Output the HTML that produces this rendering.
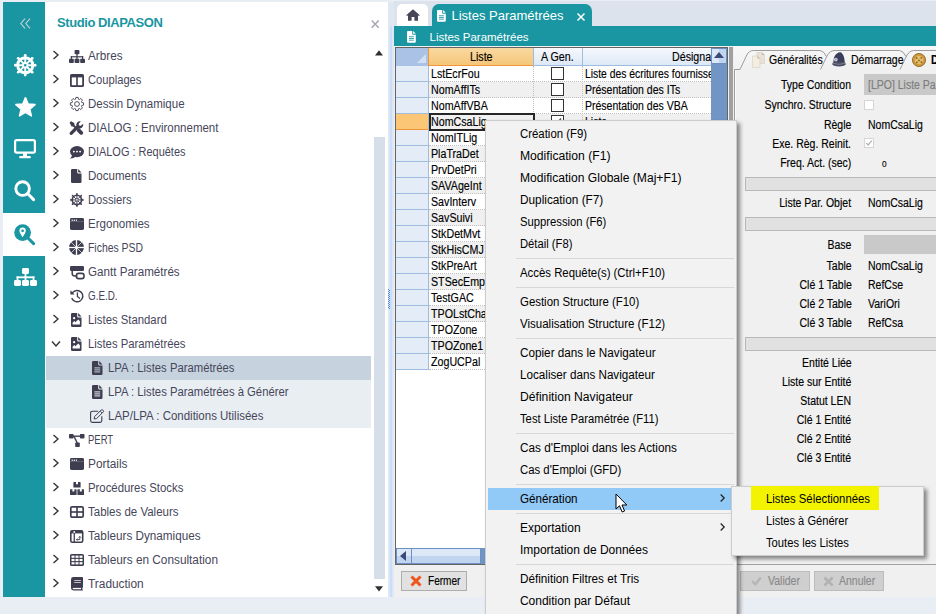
<!DOCTYPE html><html><head><meta charset="utf-8"><style>
*{box-sizing:border-box;margin:0;padding:0}
html,body{width:936px;height:614px;overflow:hidden}
body{position:relative;background:#e9eef4;font-family:"Liberation Sans",sans-serif;}
.a{position:absolute}
.t{position:absolute;white-space:pre;line-height:1}
.tree{font-size:12px;color:#46465a}
.g{font-size:12px;color:#000;transform:scaleX(0.89);transform-origin:0 0;-webkit-text-stroke:0.15px #000}
.m{font-size:12px;color:#000}
.f{font-size:12px;color:#000;transform:scaleX(0.875);transform-origin:0 0;-webkit-text-stroke:0.15px currentColor}
.fr{transform-origin:100% 0}
svg{position:absolute;overflow:visible}
</style></head><body><div class="a" style="left:3px;top:2px;width:42px;height:595px;background:#1996a1"></div>
<div class="a" style="left:3px;top:213px;width:42px;height:43px;background:#fff"></div>
<div class="a" style="left:45px;top:2px;width:343px;height:595px;background:#fff"></div>
<div class="t" style="left:57px;top:16px;font-size:13px;font-weight:700;letter-spacing:-0.42px;color:#1996a1">Studio DIAPASON</div>
<svg style="left:13.57px;top:53.77px" width="22.47" height="22.47" viewBox="0 0 16 16"><circle cx="8" cy="8" r="5.4" fill="none" stroke="#fff" stroke-width="2.1"/><circle cx="8" cy="8" r="1.6" fill="none" stroke="#fff" stroke-width="1.35"/><line x1="9.80" y1="8.00" x2="15.00" y2="8.00" stroke="#fff" stroke-width="1.35"/><circle cx="15.00" cy="8.00" r="1.0" fill="#fff"/><line x1="9.27" y1="9.27" x2="12.95" y2="12.95" stroke="#fff" stroke-width="1.35"/><circle cx="12.95" cy="12.95" r="1.0" fill="#fff"/><line x1="8.00" y1="9.80" x2="8.00" y2="15.00" stroke="#fff" stroke-width="1.35"/><circle cx="8.00" cy="15.00" r="1.0" fill="#fff"/><line x1="6.73" y1="9.27" x2="3.05" y2="12.95" stroke="#fff" stroke-width="1.35"/><circle cx="3.05" cy="12.95" r="1.0" fill="#fff"/><line x1="6.20" y1="8.00" x2="1.00" y2="8.00" stroke="#fff" stroke-width="1.35"/><circle cx="1.00" cy="8.00" r="1.0" fill="#fff"/><line x1="6.73" y1="6.73" x2="3.05" y2="3.05" stroke="#fff" stroke-width="1.35"/><circle cx="3.05" cy="3.05" r="1.0" fill="#fff"/><line x1="8.00" y1="6.20" x2="8.00" y2="1.00" stroke="#fff" stroke-width="1.35"/><circle cx="8.00" cy="1.00" r="1.0" fill="#fff"/><line x1="9.27" y1="6.73" x2="12.95" y2="3.05" stroke="#fff" stroke-width="1.35"/><circle cx="12.95" cy="3.05" r="1.0" fill="#fff"/></svg>
<svg style="left:14.55px;top:96.83px" width="20.90" height="19.95" viewBox="0 0 22 21"><polygon points="11.00,0.70 13.82,7.42 21.08,8.02 15.57,12.78 17.23,19.88 11.00,16.10 4.77,19.88 6.43,12.78 0.92,8.02 8.18,7.42" fill="#fff" stroke="#fff" stroke-width="1.6" stroke-linejoin="round"/></svg>
<svg style="left:14.00px;top:138.60px" width="22.00" height="20.00" viewBox="0 0 22 20"><rect x="1.1" y="1.1" width="19.8" height="12.6" rx="1.6" fill="none" stroke="#fff" stroke-width="2.2"/><rect x="9" y="14" width="4" height="3.4" fill="#fff"/><rect x="5.2" y="17" width="11.6" height="2.2" rx="1" fill="#fff"/></svg>
<svg style="left:14.20px;top:179.90px" width="21.00" height="21.00" viewBox="0 0 21 21"><circle cx="8.6" cy="8.6" r="6.8" fill="none" stroke="#fff" stroke-width="2.9"/><path d="M13.8 13.8 L19.6 19.6" stroke="#fff" stroke-width="3" stroke-linecap="round"/></svg>
<svg style="left:14.20px;top:224.00px" width="21.00" height="21.00" viewBox="0 0 21 21"><circle cx="8.6" cy="8.6" r="8.4" fill="#1996a1"/><path d="M14.2 14.2 L19.6 19.6" stroke="#1996a1" stroke-width="3" stroke-linecap="round"/><path d="M8.6 3.6 Q11.8 3.6 11.8 6.7 Q11.8 8.6 8.6 13.2 Q5.4 8.6 5.4 6.7 Q5.4 3.6 8.6 3.6 Z" fill="#fff"/><circle cx="8.6" cy="6.8" r="1.35" fill="#1996a1"/></svg>
<svg style="left:13.50px;top:267.50px" width="23.00" height="18.00" viewBox="0 0 23 18"><rect x="8" y="0" width="7" height="6" rx="1.4" fill="#fff"/><rect x="10.6" y="5.6" width="1.8" height="4" fill="#fff"/><rect x="2.6" y="8.4" width="17.8" height="1.8" fill="#fff"/>
<rect x="2.6" y="8.4" width="1.8" height="4" fill="#fff"/><rect x="10.6" y="8.4" width="1.8" height="4" fill="#fff"/><rect x="18.6" y="8.4" width="1.8" height="4" fill="#fff"/>
<rect x="0" y="12" width="7" height="6" rx="1.4" fill="#fff"/><rect x="8" y="12" width="7" height="6" rx="1.4" fill="#fff"/><rect x="16" y="12" width="7" height="6" rx="1.4" fill="#fff"/></svg>
<svg style="left:20px;top:18px" width="11" height="11" viewBox="0 0 11 11"><path d="M5 0.6 L0.8 5.5 L5 10.4 M10 0.6 L5.8 5.5 L10 10.4" fill="none" stroke="#c9d3d6" stroke-width="1.1"/></svg>
<svg style="left:371px;top:19.5px" width="8.4" height="8.2" viewBox="0 0 9 9"><path d="M0.6 0.6 L8.4 8.4 M8.4 0.6 L0.6 8.4" fill="none" stroke="#a3a8b0" stroke-width="1.6"/></svg>
<svg style="left:375.2px;top:50.2px" width="8" height="5.8" viewBox="0 0 9 6"><path d="M0 6 L4.5 0 L9 6 Z" fill="#303030"/></svg>
<svg style="left:375.1px;top:586px" width="8" height="5.6" viewBox="0 0 9 6"><path d="M0 0 L4.5 6 L9 0 Z" fill="#303030"/></svg>
<div class="a" style="left:46px;top:356px;width:325px;height:24px;background:#c6d3df"></div>
<div class="a" style="left:46px;top:380px;width:325px;height:48px;background:#e9eef3"></div>
<div class="a" style="left:374px;top:137px;width:11px;height:442px;background:#d5dee9"></div>
<div class="t tree" style="left:87.90px;top:49.7px;transform:scaleX(0.9781);transform-origin:0 0">Arbres</div>
<svg style="left:52px;top:50px" width="8" height="10" viewBox="0 0 8 10"><path d="M1.5 1 L6 5 L1.5 9" fill="none" stroke="#333" stroke-width="1.4"/></svg>
<svg style="left:68.50px;top:49.50px" width="16.00" height="13.00" viewBox="0 0 16 13"><rect x="5.6" y="0" width="4.8" height="4.3" rx="0.8" fill="#3e3e50"/>
<rect x="7.4" y="4" width="1.2" height="3" fill="#3e3e50"/><rect x="1.8" y="6.2" width="12.4" height="1.2" fill="#3e3e50"/>
<rect x="1.8" y="6.2" width="1.2" height="3" fill="#3e3e50"/><rect x="7.4" y="6.2" width="1.2" height="3" fill="#3e3e50"/><rect x="13" y="6.2" width="1.2" height="3" fill="#3e3e50"/>
<rect x="0" y="8.7" width="4.8" height="4.3" rx="0.8" fill="#3e3e50"/><rect x="5.6" y="8.7" width="4.8" height="4.3" rx="0.8" fill="#3e3e50"/><rect x="11.2" y="8.7" width="4.8" height="4.3" rx="0.8" fill="#3e3e50"/></svg>
<div class="t tree" style="left:87.90px;top:73.7px;transform:scaleX(0.9307);transform-origin:0 0">Couplages</div>
<svg style="left:52px;top:74px" width="8" height="10" viewBox="0 0 8 10"><path d="M1.5 1 L6 5 L1.5 9" fill="none" stroke="#333" stroke-width="1.4"/></svg>
<svg style="left:69.50px;top:73.50px" width="14.00" height="13.00" viewBox="0 0 14 13"><rect x="0" y="0" width="14" height="13" rx="1.6" fill="#3e3e50"/><rect x="1.8" y="3.4" width="4.4" height="7.8" fill="#fff"/><rect x="7.8" y="3.4" width="4.4" height="7.8" fill="#fff"/></svg>
<div class="t tree" style="left:87.90px;top:97.7px;transform:scaleX(0.9588);transform-origin:0 0">Dessin Dynamique</div>
<svg style="left:52px;top:98px" width="8" height="10" viewBox="0 0 8 10"><path d="M1.5 1 L6 5 L1.5 9" fill="none" stroke="#333" stroke-width="1.4"/></svg>
<svg style="left:69.50px;top:97.00px" width="14.00" height="14.00" viewBox="0 0 14 14"><path d="M5.52 2.22 L5.87 0.40 L8.13 0.40 L8.48 2.22 L9.33 2.58 L10.87 1.53 L12.47 3.13 L11.42 4.67 L11.78 5.52 L13.60 5.87 L13.60 8.13 L11.78 8.48 L11.42 9.33 L12.47 10.87 L10.87 12.47 L9.33 11.42 L8.48 11.78 L8.13 13.60 L5.87 13.60 L5.52 11.78 L4.67 11.42 L3.13 12.47 L1.53 10.87 L2.58 9.33 L2.22 8.48 L0.40 8.13 L0.40 5.87 L2.22 5.52 L2.58 4.67 L1.53 3.13 L3.13 1.53 L4.67 2.58 Z" fill="none" stroke="#3e3e50" stroke-width="0.9" stroke-linejoin="round"/><circle cx="7" cy="7" r="2.4" fill="none" stroke="#3e3e50" stroke-width="0.9"/></svg>
<div class="t tree" style="left:87.90px;top:121.7px;transform:scaleX(0.9588);transform-origin:0 0">DIALOG : Environnement</div>
<svg style="left:52px;top:122px" width="8" height="10" viewBox="0 0 8 10"><path d="M1.5 1 L6 5 L1.5 9" fill="none" stroke="#333" stroke-width="1.4"/></svg>
<svg style="left:69.02px;top:120.72px" width="14.55" height="14.55" viewBox="0 0 15 15"><path d="M0.6 1.6 L2.2 0.2 L5.6 2.4 L5.6 4.2 L8.2 6.8 L6.8 8.2 L4.2 5.6 L2.6 5.6 Z" fill="#3e3e50"/>
<path d="M8.6 8.4 L10.2 7.0 L14.2 11.0 Q15.2 12.4 14 13.8 Q12.6 14.8 11.4 13.8 L8 10.2 Z" fill="#3e3e50"/>
<path d="M14.6 2.8 Q15.2 5.6 13.2 7.0 Q11.6 8.0 10.0 7.4 L3.4 14.0 Q2.2 14.9 1.0 13.9 Q0.1 12.8 1.0 11.6 L7.6 5.0 Q7.0 3.0 8.6 1.4 Q10.2 0.0 12.2 0.5 L10.0 2.8 L10.4 4.6 L12.2 5.0 Z" fill="#3e3e50"/></svg>
<div class="t tree" style="left:87.90px;top:145.7px;transform:scaleX(0.9133);transform-origin:0 0">DIALOG : Requêtes</div>
<svg style="left:52px;top:146px" width="8" height="10" viewBox="0 0 8 10"><path d="M1.5 1 L6 5 L1.5 9" fill="none" stroke="#333" stroke-width="1.4"/></svg>
<svg style="left:69.50px;top:145.50px" width="14.00" height="13.00" viewBox="0 0 14 13"><ellipse cx="7" cy="5.6" rx="7" ry="5.6" fill="#3e3e50"/><path d="M2.2 8.4 Q1.6 11.4 0 12.6 Q3.6 12.8 5.8 10.6 Z" fill="#3e3e50"/>
<circle cx="3.9" cy="5.6" r="0.95" fill="#fff"/><circle cx="7" cy="5.6" r="0.95" fill="#fff"/><circle cx="10.1" cy="5.6" r="0.95" fill="#fff"/></svg>
<div class="t tree" style="left:87.90px;top:169.7px;transform:scaleX(0.9630);transform-origin:0 0">Documents</div>
<svg style="left:52px;top:170px" width="8" height="10" viewBox="0 0 8 10"><path d="M1.5 1 L6 5 L1.5 9" fill="none" stroke="#333" stroke-width="1.4"/></svg>
<svg style="left:71.25px;top:169.00px" width="10.50" height="14.00" viewBox="0 0 10.5 14"><path d="M1.2 0 H6.2 V3.6 Q6.2 4.4 7 4.4 H10.5 V12.8 Q10.5 14 9.3 14 H1.2 Q0 14 0 12.8 V1.2 Q0 0 1.2 0 Z" fill="#3e3e50"/><path d="M7.2 0 L10.5 3.4 H7.6 Q7.2 3.4 7.2 3 Z" fill="#3e3e50"/></svg>
<div class="t tree" style="left:87.90px;top:193.7px;transform:scaleX(0.9330);transform-origin:0 0">Dossiers</div>
<svg style="left:52px;top:194px" width="8" height="10" viewBox="0 0 8 10"><path d="M1.5 1 L6 5 L1.5 9" fill="none" stroke="#333" stroke-width="1.4"/></svg>
<svg style="left:69.60px;top:193.10px" width="13.80" height="13.80" viewBox="0 0 16 16"><circle cx="8" cy="8" r="5.4" fill="none" stroke="#3e3e50" stroke-width="2.0"/><circle cx="8" cy="8" r="1.6" fill="none" stroke="#3e3e50" stroke-width="1.1"/><line x1="9.80" y1="8.00" x2="15.00" y2="8.00" stroke="#3e3e50" stroke-width="1.1"/><circle cx="15.00" cy="8.00" r="1.0" fill="#3e3e50"/><line x1="9.27" y1="9.27" x2="12.95" y2="12.95" stroke="#3e3e50" stroke-width="1.1"/><circle cx="12.95" cy="12.95" r="1.0" fill="#3e3e50"/><line x1="8.00" y1="9.80" x2="8.00" y2="15.00" stroke="#3e3e50" stroke-width="1.1"/><circle cx="8.00" cy="15.00" r="1.0" fill="#3e3e50"/><line x1="6.73" y1="9.27" x2="3.05" y2="12.95" stroke="#3e3e50" stroke-width="1.1"/><circle cx="3.05" cy="12.95" r="1.0" fill="#3e3e50"/><line x1="6.20" y1="8.00" x2="1.00" y2="8.00" stroke="#3e3e50" stroke-width="1.1"/><circle cx="1.00" cy="8.00" r="1.0" fill="#3e3e50"/><line x1="6.73" y1="6.73" x2="3.05" y2="3.05" stroke="#3e3e50" stroke-width="1.1"/><circle cx="3.05" cy="3.05" r="1.0" fill="#3e3e50"/><line x1="8.00" y1="6.20" x2="8.00" y2="1.00" stroke="#3e3e50" stroke-width="1.1"/><circle cx="8.00" cy="1.00" r="1.0" fill="#3e3e50"/><line x1="9.27" y1="6.73" x2="12.95" y2="3.05" stroke="#3e3e50" stroke-width="1.1"/><circle cx="12.95" cy="3.05" r="1.0" fill="#3e3e50"/></svg>
<div class="t tree" style="left:87.90px;top:217.7px;transform:scaleX(0.9625);transform-origin:0 0">Ergonomies</div>
<svg style="left:52px;top:218px" width="8" height="10" viewBox="0 0 8 10"><path d="M1.5 1 L6 5 L1.5 9" fill="none" stroke="#333" stroke-width="1.4"/></svg>
<svg style="left:69.50px;top:218.00px" width="14.00" height="12.00" viewBox="0 0 14 12"><rect x="0" y="0" width="14" height="12" rx="1.4" fill="#3e3e50"/><rect x="1.6" y="1.6" width="1.3" height="1.2" fill="#fff"/><rect x="3.7" y="1.6" width="1.3" height="1.2" fill="#fff"/><rect x="5.8" y="1.6" width="1.3" height="1.2" fill="#fff"/><rect x="0" y="3.5" width="14" height="0.5" fill="#fff" opacity="0.35"/></svg>
<div class="t tree" style="left:87.90px;top:241.7px;transform:scaleX(0.8679);transform-origin:0 0">Fiches PSD</div>
<svg style="left:52px;top:242px" width="8" height="10" viewBox="0 0 8 10"><path d="M1.5 1 L6 5 L1.5 9" fill="none" stroke="#333" stroke-width="1.4"/></svg>
<svg style="left:69.00px;top:240.00px" width="15.00" height="15.00" viewBox="0 0 15 15"><circle cx="7.5" cy="7.5" r="7.4" fill="#3e3e50"/><circle cx="7.5" cy="7.5" r="1.5" fill="#fff"/><line x1="8.50" y1="7.50" x2="15.10" y2="7.50" stroke="#fff" stroke-width="1.3"/><line x1="7.50" y1="8.50" x2="7.50" y2="15.10" stroke="#fff" stroke-width="1.3"/><line x1="6.50" y1="7.50" x2="-0.10" y2="7.50" stroke="#fff" stroke-width="1.3"/><line x1="7.50" y1="6.50" x2="7.50" y2="-0.10" stroke="#fff" stroke-width="1.3"/><line x1="8.21" y1="8.21" x2="12.87" y2="12.87" stroke="#fff" stroke-width="0.7"/><line x1="6.79" y1="8.21" x2="2.13" y2="12.87" stroke="#fff" stroke-width="0.7"/><line x1="6.79" y1="6.79" x2="2.13" y2="2.13" stroke="#fff" stroke-width="0.7"/><line x1="8.21" y1="6.79" x2="12.87" y2="2.13" stroke="#fff" stroke-width="0.7"/></svg>
<div class="t tree" style="left:87.90px;top:265.7px;transform:scaleX(0.9678);transform-origin:0 0">Gantt Paramétrés</div>
<svg style="left:52px;top:266px" width="8" height="10" viewBox="0 0 8 10"><path d="M1.5 1 L6 5 L1.5 9" fill="none" stroke="#333" stroke-width="1.4"/></svg>
<svg style="left:69.50px;top:265.50px" width="14.00" height="13.00" viewBox="0 0 14 13"><rect x="0" y="0" width="14" height="5" rx="1.2" fill="#3e3e50"/><path d="M2.2 4.5 V7.6 Q2.2 10 4.6 10 H7.4" fill="none" stroke="#3e3e50" stroke-width="1.5"/><rect x="6.4" y="7.4" width="7.6" height="5.2" rx="2.2" fill="none" stroke="#3e3e50" stroke-width="1.6"/></svg>
<div class="t tree" style="left:87.90px;top:289.7px;transform:scaleX(0.8222);transform-origin:0 0">G.E.D.</div>
<svg style="left:52px;top:290px" width="8" height="10" viewBox="0 0 8 10"><path d="M1.5 1 L6 5 L1.5 9" fill="none" stroke="#333" stroke-width="1.4"/></svg>
<svg style="left:69.50px;top:289.00px" width="14.00" height="14.00" viewBox="0 0 14 14"><path d="M2.6 3.6 A5.7 5.7 0 1 1 2.0 9.6" fill="none" stroke="#3e3e50" stroke-width="1.5" stroke-linecap="round"/><path d="M0.4 1.2 V5.4 H4.6 Z" fill="#3e3e50"/><path d="M7.4 3.8 V7.4 L9.6 9.2" fill="none" stroke="#3e3e50" stroke-width="1.3" stroke-linecap="round"/></svg>
<div class="t tree" style="left:87.90px;top:313.7px;transform:scaleX(0.9439);transform-origin:0 0">Listes Standard</div>
<svg style="left:52px;top:314px" width="8" height="10" viewBox="0 0 8 10"><path d="M1.5 1 L6 5 L1.5 9" fill="none" stroke="#333" stroke-width="1.4"/></svg>
<svg style="left:71.25px;top:313.00px" width="10.50" height="14.00" viewBox="0 0 10.5 14"><path d="M1.2 0 H6.2 V3.6 Q6.2 4.4 7 4.4 H10.5 V12.8 Q10.5 14 9.3 14 H1.2 Q0 14 0 12.8 V1.2 Q0 0 1.2 0 Z" fill="#3e3e50"/><path d="M7.2 0 L10.5 3.4 H7.6 Q7.2 3.4 7.2 3 Z" fill="#3e3e50"/>
<circle cx="3.1" cy="5.2" r="1.15" fill="#fff"/><path d="M1.6 11.4 V9.8 L3.3 8 L4.5 9.2 L7.2 6.4 L8.9 8.2 V11.4 Z" fill="#fff"/></svg>
<div class="t tree" style="left:87.90px;top:337.7px;transform:scaleX(0.9432);transform-origin:0 0">Listes Paramétrées</div>
<svg style="left:51px;top:340px" width="10" height="8" viewBox="0 0 10 8"><path d="M1 1.5 L5 6 L9 1.5" fill="none" stroke="#333" stroke-width="1.4"/></svg>
<svg style="left:71.25px;top:337.00px" width="10.50" height="14.00" viewBox="0 0 10.5 14"><path d="M1.2 0 H6.2 V3.6 Q6.2 4.4 7 4.4 H10.5 V12.8 Q10.5 14 9.3 14 H1.2 Q0 14 0 12.8 V1.2 Q0 0 1.2 0 Z" fill="#3e3e50"/><path d="M7.2 0 L10.5 3.4 H7.6 Q7.2 3.4 7.2 3 Z" fill="#3e3e50"/>
<circle cx="3.1" cy="5.2" r="1.15" fill="#fff"/><path d="M1.6 11.4 V9.8 L3.3 8 L4.5 9.2 L7.2 6.4 L8.9 8.2 V11.4 Z" fill="#fff"/></svg>
<div class="t tree" style="left:107.80px;top:361.7px;transform:scaleX(0.9405);transform-origin:0 0">LPA : Listes Paramétrées</div>
<svg style="left:91.75px;top:361.00px" width="10.50" height="14.00" viewBox="0 0 10.5 14"><path d="M1.2 0 H6.2 V3.6 Q6.2 4.4 7 4.4 H10.5 V12.8 Q10.5 14 9.3 14 H1.2 Q0 14 0 12.8 V1.2 Q0 0 1.2 0 Z" fill="#3e3e50"/><path d="M7.2 0 L10.5 3.4 H7.6 Q7.2 3.4 7.2 3 Z" fill="#3e3e50"/>
<rect x="2.4" y="6.4" width="5.8" height="1" fill="#c6d3df"/><rect x="2.4" y="8.4" width="5.8" height="1" fill="#c6d3df"/><rect x="2.4" y="10.4" width="5.8" height="1" fill="#c6d3df"/></svg>
<div class="t tree" style="left:107.80px;top:385.7px;transform:scaleX(0.9407);transform-origin:0 0">LPA : Listes Paramétrées à Générer</div>
<svg style="left:91.75px;top:385.00px" width="10.50" height="14.00" viewBox="0 0 10.5 14"><path d="M1.2 0 H6.2 V3.6 Q6.2 4.4 7 4.4 H10.5 V12.8 Q10.5 14 9.3 14 H1.2 Q0 14 0 12.8 V1.2 Q0 0 1.2 0 Z" fill="#3e3e50"/><path d="M7.2 0 L10.5 3.4 H7.6 Q7.2 3.4 7.2 3 Z" fill="#3e3e50"/>
<rect x="2.4" y="6.4" width="5.8" height="1" fill="#e9eef3"/><rect x="2.4" y="8.4" width="5.8" height="1" fill="#e9eef3"/><rect x="2.4" y="10.4" width="5.8" height="1" fill="#e9eef3"/></svg>
<div class="t tree" style="left:107.80px;top:409.7px;transform:scaleX(0.9563);transform-origin:0 0">LAP/LPA : Conditions Utilisées</div>
<svg style="left:90.00px;top:409.00px" width="14.00" height="14.00" viewBox="0 0 14 14"><path d="M8.2 2.2 H2.4 Q0.6 2.2 0.6 4 V11.6 Q0.6 13.4 2.4 13.4 H10 Q11.8 13.4 11.8 11.6 V7.2" fill="none" stroke="#3e3e50" stroke-width="1.1"/><path d="M4.6 7.6 L11.3 0.9 Q12 0.3 12.7 0.9 L13.3 1.5 Q13.9 2.2 13.3 2.9 L6.6 9.6 L4.2 10 Z" fill="#e9eef3" stroke="#3e3e50" stroke-width="1"/><path d="M10.2 2.1 L12.1 4" stroke="#3e3e50" stroke-width="0.9"/></svg>
<div class="t tree" style="left:87.90px;top:433.7px;transform:scaleX(0.7906);transform-origin:0 0">PERT</div>
<svg style="left:52px;top:434px" width="8" height="10" viewBox="0 0 8 10"><path d="M1.5 1 L6 5 L1.5 9" fill="none" stroke="#333" stroke-width="1.4"/></svg>
<svg style="left:68.75px;top:433.50px" width="15.50" height="13.00" viewBox="0 0 15.5 13"><rect x="0" y="0" width="4.6" height="4.4" rx="0.8" fill="#3e3e50"/><rect x="10.9" y="0" width="4.6" height="4.4" rx="0.8" fill="#3e3e50"/><rect x="6.2" y="8.6" width="4.6" height="4.4" rx="0.8" fill="#3e3e50"/><rect x="4" y="1.5" width="7.4" height="1.4" fill="#3e3e50"/><path d="M5 2.4 L8.4 9.2" stroke="#3e3e50" stroke-width="1.4"/></svg>
<div class="t tree" style="left:87.90px;top:457.7px;transform:scaleX(0.9875);transform-origin:0 0">Portails</div>
<svg style="left:52px;top:458px" width="8" height="10" viewBox="0 0 8 10"><path d="M1.5 1 L6 5 L1.5 9" fill="none" stroke="#333" stroke-width="1.4"/></svg>
<svg style="left:69.50px;top:458.00px" width="14.00" height="12.00" viewBox="0 0 14 12"><rect x="0" y="0" width="14" height="12" rx="1.4" fill="#3e3e50"/><rect x="1.6" y="1.6" width="1.3" height="1.2" fill="#fff"/><rect x="3.7" y="1.6" width="1.3" height="1.2" fill="#fff"/><rect x="5.8" y="1.6" width="1.3" height="1.2" fill="#fff"/><rect x="0" y="3.5" width="14" height="0.5" fill="#fff" opacity="0.35"/></svg>
<div class="t tree" style="left:87.90px;top:481.7px;transform:scaleX(0.9469);transform-origin:0 0">Procédures Stocks</div>
<svg style="left:52px;top:482px" width="8" height="10" viewBox="0 0 8 10"><path d="M1.5 1 L6 5 L1.5 9" fill="none" stroke="#333" stroke-width="1.4"/></svg>
<svg style="left:69.50px;top:481.50px" width="14.00" height="13.00" viewBox="0 0 14 13"><path d="M4 0 H6 V2.2 H8 V0 H10 Q10.6 0 10.6 0.6 V5 Q10.6 5.6 10 5.6 H4 Q3.4 5.6 3.4 5 V0.6 Q3.4 0 4 0 Z" fill="#3e3e50"/>
<path d="M0.6 7.2 H2.4 V9.4 H4.4 V7.2 H6.2 Q6.6 7.2 6.6 7.7 V12.4 Q6.6 13 6.2 13 H0.6 Q0 13 0 12.4 V7.7 Q0 7.2 0.6 7.2 Z" fill="#3e3e50"/>
<path d="M8 7.2 H9.8 V9.4 H11.8 V7.2 H13.4 Q14 7.2 14 7.7 V12.4 Q14 13 13.4 13 H8 Q7.4 13 7.4 12.4 V7.7 Q7.4 7.2 8 7.2 Z" fill="#3e3e50"/></svg>
<div class="t tree" style="left:87.90px;top:505.7px;transform:scaleX(0.9577);transform-origin:0 0">Tables de Valeurs</div>
<svg style="left:52px;top:506px" width="8" height="10" viewBox="0 0 8 10"><path d="M1.5 1 L6 5 L1.5 9" fill="none" stroke="#333" stroke-width="1.4"/></svg>
<svg style="left:69.50px;top:506.00px" width="14.00" height="12.00" viewBox="0 0 14 12"><rect x="0.8" y="0.8" width="12.4" height="10.4" rx="1.4" fill="none" stroke="#3e3e50" stroke-width="1.7"/><rect x="6.2" y="0.8" width="1.6" height="10.4" fill="#3e3e50"/><rect x="0.8" y="5.2" width="12.4" height="1.6" fill="#3e3e50"/></svg>
<div class="t tree" style="left:87.90px;top:529.7px;transform:scaleX(0.9759);transform-origin:0 0">Tableurs Dynamiques</div>
<svg style="left:52px;top:530px" width="8" height="10" viewBox="0 0 8 10"><path d="M1.5 1 L6 5 L1.5 9" fill="none" stroke="#333" stroke-width="1.4"/></svg>
<svg style="left:69.75px;top:529.50px" width="13.50" height="13.00" viewBox="0 0 13.5 13"><rect x="0.8" y="0.8" width="11.9" height="11.4" rx="1.5" fill="none" stroke="#3e3e50" stroke-width="1.6"/><rect x="0.8" y="0.8" width="11.9" height="2.6" fill="#3e3e50"/><rect x="3.6" y="0.8" width="1.3" height="11.4" fill="#3e3e50"/><rect x="3.4" y="1.2" width="1.7" height="1.6" fill="#fff"/><path d="M6.4 9.6 H9.8 V6.6 M8.6 7.6 L9.8 6.4 L11 7.6 M7.4 8.6 L6.4 9.6 L7.4 10.6" fill="none" stroke="#3e3e50" stroke-width="0.9"/></svg>
<div class="t tree" style="left:87.90px;top:553.7px;transform:scaleX(0.9839);transform-origin:0 0">Tableurs en Consultation</div>
<svg style="left:52px;top:554px" width="8" height="10" viewBox="0 0 8 10"><path d="M1.5 1 L6 5 L1.5 9" fill="none" stroke="#333" stroke-width="1.4"/></svg>
<svg style="left:69.50px;top:554.00px" width="14.00" height="12.00" viewBox="0 0 14 12"><rect x="0" y="0" width="14" height="12" rx="1.6" fill="#3e3e50"/><rect x="1.5" y="1.6" width="3" height="2.2" fill="#fff"/><rect x="5.5" y="1.6" width="3" height="2.2" fill="#fff"/><rect x="9.5" y="1.6" width="3" height="2.2" fill="#fff"/><rect x="1.5" y="4.9" width="3" height="2.2" fill="#fff"/><rect x="5.5" y="4.9" width="3" height="2.2" fill="#fff"/><rect x="9.5" y="4.9" width="3" height="2.2" fill="#fff"/><rect x="1.5" y="8.2" width="3" height="2.2" fill="#fff"/><rect x="5.5" y="8.2" width="3" height="2.2" fill="#fff"/><rect x="9.5" y="8.2" width="3" height="2.2" fill="#fff"/></svg>
<div class="t tree" style="left:87.90px;top:577.7px;transform:scaleX(0.9902);transform-origin:0 0">Traduction</div>
<svg style="left:52px;top:578px" width="8" height="10" viewBox="0 0 8 10"><path d="M1.5 1 L6 5 L1.5 9" fill="none" stroke="#333" stroke-width="1.4"/></svg>
<svg style="left:70.50px;top:577.25px" width="12.00" height="13.50" viewBox="0 0 12 13.5"><path d="M2.4 0 H11.2 Q12 0 12 0.8 V10 Q12 10.6 11.4 10.8 V12.4 Q12 12.6 12 13 Q12 13.5 11.4 13.5 H2.4 Q0 13.5 0 11.1 V2.4 Q0 0 2.4 0 Z" fill="#3e3e50"/><rect x="1.8" y="10.9" width="8.2" height="1.3" fill="#fff"/><rect x="3.2" y="3" width="6.6" height="0.9" fill="#fff" opacity="0.75"/><rect x="3.2" y="5" width="6.6" height="0.9" fill="#fff" opacity="0.75"/></svg>
<div class="a" style="left:394px;top:1px;width:542px;height:25px;background:#dce3ec"></div>
<div class="a" style="left:397px;top:4px;width:31px;height:22px;background:#fff;border-radius:5px 5px 0 0"></div>
<svg style="left:406px;top:9px" width="14" height="12" viewBox="0 0 14 12"><path d="M7 0.2 L13.8 6.2 L13 7.1 L12 6.3 V11.8 H8.4 V8 H5.6 V11.8 H2 V6.3 L1 7.1 L0.2 6.2 Z" fill="#464658"/></svg>
<div class="a" style="left:432px;top:3.5px;width:160px;height:23px;background:#1996a1;border-radius:7px 7px 0 0"></div>
<div class="a" style="left:394px;top:26px;width:542px;height:20px;background:#1996a1"></div>
<div class="t" style="left:451.5px;top:9px;font-size:13px;color:#fff">Listes Paramétrées</div>
<svg style="left:437.29px;top:10.32px" width="8.82" height="11.76" viewBox="0 0 10.5 14"><path d="M1.2 0 H6.2 V3.6 Q6.2 4.4 7 4.4 H10.5 V12.8 Q10.5 14 9.3 14 H1.2 Q0 14 0 12.8 V1.2 Q0 0 1.2 0 Z" fill="#fff"/><path d="M7.2 0 L10.5 3.4 H7.6 Q7.2 3.4 7.2 3 Z" fill="#fff"/>
<rect x="2.4" y="6.4" width="5.8" height="1" fill="#1996a1"/><rect x="2.4" y="8.4" width="5.8" height="1" fill="#1996a1"/><rect x="2.4" y="10.4" width="5.8" height="1" fill="#1996a1"/></svg>
<svg style="left:407.29px;top:31.22px" width="8.82" height="11.76" viewBox="0 0 10.5 14"><path d="M1.2 0 H6.2 V3.6 Q6.2 4.4 7 4.4 H10.5 V12.8 Q10.5 14 9.3 14 H1.2 Q0 14 0 12.8 V1.2 Q0 0 1.2 0 Z" fill="#fff"/><path d="M7.2 0 L10.5 3.4 H7.6 Q7.2 3.4 7.2 3 Z" fill="#fff"/>
<rect x="2.4" y="6.4" width="5.8" height="1" fill="#1996a1"/><rect x="2.4" y="8.4" width="5.8" height="1" fill="#1996a1"/><rect x="2.4" y="10.4" width="5.8" height="1" fill="#1996a1"/></svg>
<svg style="left:577px;top:12.5px" width="8" height="8" viewBox="0 0 8 8"><path d="M0.5 0.5 L7.5 7.5 M7.5 0.5 L0.5 7.5" stroke="#fff" stroke-width="1.5" fill="none"/></svg>
<div class="t" style="left:429.5px;top:31.5px;font-size:11.5px;color:#fff">Listes Paramétrées</div>
<div class="a" style="left:394px;top:46px;width:542px;height:551px;background:#f0f0f0"></div>
<div class="a" style="left:395px;top:47px;width:333px;height:518px;background:#fff;border:1px solid #646464"></div>
<div class="a" style="left:388px;top:2px;width:6px;height:595px;background:#dfe7f2"></div>
<div class="a" style="left:390px;top:26px;width:2px;height:571px;background:#c9defa"></div>
<div class="a" style="left:388px;top:289px;width:1px;height:19px;border-left:1px dotted #4f86d6"></div>
<div class="a" style="left:389px;top:290px;width:1px;height:19px;border-left:1px dotted #4f86d6"></div>
<div class="a" style="left:396px;top:48px;width:32px;height:18px;background:#a9c2e6"></div>
<svg style="left:417px;top:54px" width="9" height="9" viewBox="0 0 9 9"><path d="M9 0 V9 H0 Z" fill="#d3e0f3"/></svg>
<div class="a" style="left:428px;top:48px;width:105px;height:18px;background:linear-gradient(#f9d9a0,#f6c67a);border-left:1px solid #f29536;border-bottom:1px solid #f29536"></div>
<div class="a" style="left:533px;top:48px;width:49px;height:18px;background:linear-gradient(#f6f9fd,#dde8f6);border-left:1px solid #9ebbe0;border-bottom:1px solid #9ebbe0"></div>
<div class="a" style="left:582px;top:48px;width:129px;height:18px;background:linear-gradient(#f6f9fd,#dde8f6);border-left:1px solid #9ebbe0;border-bottom:1px solid #9ebbe0"></div>
<div class="t g" style="left:469.7px;top:51px">Liste</div>
<div class="t g" style="left:541px;top:51px">A Gen.</div>
<div class="t g" style="left:672px;top:51px">Désigna</div>
<div class="a" style="left:396px;top:66px;width:32px;height:16px;background:#e4ecf7;border-bottom:1px solid #9ebbe0"></div>
<div class="a" style="left:429px;top:66px;width:282px;height:16px;background:#fff;border-bottom:1px dotted #c0c0c0"></div>
<div class="t g" style="left:430.8px;top:68px">LstEcrFou</div>
<div class="a" style="left:551px;top:67px;width:13px;height:13px;background:#fff;border:1px solid #333"></div>
<div class="t g" style="left:585px;top:68px;transform:scaleX(0.862)">Liste des écritures fournisse</div>
<div class="a" style="left:396px;top:82px;width:32px;height:16px;background:#e4ecf7;border-bottom:1px solid #9ebbe0"></div>
<div class="a" style="left:429px;top:82px;width:282px;height:16px;background:#f0f0f0;border-bottom:1px dotted #c0c0c0"></div>
<div class="t g" style="left:430.8px;top:84px">NomAffITs</div>
<div class="a" style="left:551px;top:83px;width:13px;height:13px;background:#fff;border:1px solid #333"></div>
<div class="t g" style="left:585px;top:84px;transform:scaleX(0.875)">Présentation des ITs</div>
<div class="a" style="left:396px;top:98px;width:32px;height:16px;background:#e4ecf7;border-bottom:1px solid #9ebbe0"></div>
<div class="a" style="left:429px;top:98px;width:282px;height:16px;background:#fff;border-bottom:1px dotted #c0c0c0"></div>
<div class="t g" style="left:430.8px;top:100px">NomAffVBA</div>
<div class="a" style="left:551px;top:99px;width:13px;height:13px;background:#fff;border:1px solid #333"></div>
<div class="t g" style="left:585px;top:100px;transform:scaleX(0.875)">Présentation des VBA</div>
<div class="a" style="left:396px;top:114px;width:32px;height:16px;background:#fbc675;border-bottom:1px solid #f29536"></div>
<div class="a" style="left:429px;top:114px;width:282px;height:16px;background:#f0f0f0;border-bottom:1px dotted #c0c0c0"></div>
<div class="t g" style="left:430.8px;top:116px">NomCsaLig</div>
<div class="a" style="left:551px;top:115px;width:13px;height:13px;background:#fff;border:1px solid #333"></div>
<svg style="left:553px;top:117px" width="9" height="9" viewBox="0 0 9 9"><path d="M1 4.5 L3.5 7 L8 1.5" fill="none" stroke="#555" stroke-width="1.4"/></svg>
<div class="t g" style="left:585px;top:116px;transform:scaleX(0.875)">Liste ...</div>
<div class="a" style="left:396px;top:130px;width:32px;height:16px;background:#e4ecf7;border-bottom:1px solid #9ebbe0"></div>
<div class="a" style="left:429px;top:130px;width:282px;height:16px;background:#fff;border-bottom:1px dotted #c0c0c0"></div>
<div class="t g" style="left:430.8px;top:132px">NomITLig</div>
<div class="a" style="left:396px;top:146px;width:32px;height:16px;background:#e4ecf7;border-bottom:1px solid #9ebbe0"></div>
<div class="a" style="left:429px;top:146px;width:282px;height:16px;background:#f0f0f0;border-bottom:1px dotted #c0c0c0"></div>
<div class="t g" style="left:430.8px;top:148px">PlaTraDet</div>
<div class="a" style="left:396px;top:162px;width:32px;height:16px;background:#e4ecf7;border-bottom:1px solid #9ebbe0"></div>
<div class="a" style="left:429px;top:162px;width:282px;height:16px;background:#fff;border-bottom:1px dotted #c0c0c0"></div>
<div class="t g" style="left:430.8px;top:164px">PrvDetPri</div>
<div class="a" style="left:396px;top:178px;width:32px;height:16px;background:#e4ecf7;border-bottom:1px solid #9ebbe0"></div>
<div class="a" style="left:429px;top:178px;width:282px;height:16px;background:#f0f0f0;border-bottom:1px dotted #c0c0c0"></div>
<div class="t g" style="left:430.8px;top:180px">SAVAgeInt</div>
<div class="a" style="left:396px;top:194px;width:32px;height:16px;background:#e4ecf7;border-bottom:1px solid #9ebbe0"></div>
<div class="a" style="left:429px;top:194px;width:282px;height:16px;background:#fff;border-bottom:1px dotted #c0c0c0"></div>
<div class="t g" style="left:430.8px;top:196px">SavInterv</div>
<div class="a" style="left:396px;top:210px;width:32px;height:16px;background:#e4ecf7;border-bottom:1px solid #9ebbe0"></div>
<div class="a" style="left:429px;top:210px;width:282px;height:16px;background:#f0f0f0;border-bottom:1px dotted #c0c0c0"></div>
<div class="t g" style="left:430.8px;top:212px">SavSuivi</div>
<div class="a" style="left:396px;top:226px;width:32px;height:16px;background:#e4ecf7;border-bottom:1px solid #9ebbe0"></div>
<div class="a" style="left:429px;top:226px;width:282px;height:16px;background:#fff;border-bottom:1px dotted #c0c0c0"></div>
<div class="t g" style="left:430.8px;top:228px">StkDetMvt</div>
<div class="a" style="left:396px;top:242px;width:32px;height:16px;background:#e4ecf7;border-bottom:1px solid #9ebbe0"></div>
<div class="a" style="left:429px;top:242px;width:282px;height:16px;background:#f0f0f0;border-bottom:1px dotted #c0c0c0"></div>
<div class="t g" style="left:430.8px;top:244px">StkHisCMJ</div>
<div class="a" style="left:396px;top:258px;width:32px;height:16px;background:#e4ecf7;border-bottom:1px solid #9ebbe0"></div>
<div class="a" style="left:429px;top:258px;width:282px;height:16px;background:#fff;border-bottom:1px dotted #c0c0c0"></div>
<div class="t g" style="left:430.8px;top:260px">StkPreArt</div>
<div class="a" style="left:396px;top:274px;width:32px;height:16px;background:#e4ecf7;border-bottom:1px solid #9ebbe0"></div>
<div class="a" style="left:429px;top:274px;width:282px;height:16px;background:#f0f0f0;border-bottom:1px dotted #c0c0c0"></div>
<div class="t g" style="left:430.8px;top:276px">STSecEmp</div>
<div class="a" style="left:396px;top:290px;width:32px;height:16px;background:#e4ecf7;border-bottom:1px solid #9ebbe0"></div>
<div class="a" style="left:429px;top:290px;width:282px;height:16px;background:#fff;border-bottom:1px dotted #c0c0c0"></div>
<div class="t g" style="left:430.8px;top:292px">TestGAC</div>
<div class="a" style="left:396px;top:306px;width:32px;height:16px;background:#e4ecf7;border-bottom:1px solid #9ebbe0"></div>
<div class="a" style="left:429px;top:306px;width:282px;height:16px;background:#f0f0f0;border-bottom:1px dotted #c0c0c0"></div>
<div class="t g" style="left:430.8px;top:308px">TPOLstCha</div>
<div class="a" style="left:396px;top:322px;width:32px;height:16px;background:#e4ecf7;border-bottom:1px solid #9ebbe0"></div>
<div class="a" style="left:429px;top:322px;width:282px;height:16px;background:#fff;border-bottom:1px dotted #c0c0c0"></div>
<div class="t g" style="left:430.8px;top:324px">TPOZone</div>
<div class="a" style="left:396px;top:338px;width:32px;height:16px;background:#e4ecf7;border-bottom:1px solid #9ebbe0"></div>
<div class="a" style="left:429px;top:338px;width:282px;height:16px;background:#f0f0f0;border-bottom:1px dotted #c0c0c0"></div>
<div class="t g" style="left:430.8px;top:340px">TPOZone1</div>
<div class="a" style="left:396px;top:354px;width:32px;height:16px;background:#e4ecf7;border-bottom:1px solid #9ebbe0"></div>
<div class="a" style="left:429px;top:354px;width:282px;height:16px;background:#fff;border-bottom:1px dotted #c0c0c0"></div>
<div class="t g" style="left:430.8px;top:356px">ZogUCPal</div>
<div class="a" style="left:428px;top:66px;width:1px;height:304px;background:#9ebbe0"></div>
<div class="a" style="left:533px;top:66px;width:1px;height:304px;border-left:1px dotted #c0c0c0"></div>
<div class="a" style="left:582px;top:66px;width:1px;height:304px;border-left:1px dotted #c0c0c0"></div>
<div class="a" style="left:429px;top:113px;width:106px;height:18px;border:2px solid #262626"></div>
<div class="a" style="left:711px;top:48px;width:16px;height:516px;background:#7196c6"></div>
<div class="a" style="left:711px;top:48px;width:16px;height:16px;background:linear-gradient(90deg,#dce8f8 50%,#c1d5f0 50%);border:1px solid #6f8fc0"></div>
<svg style="left:714px;top:52px" width="10" height="6" viewBox="0 0 10 6"><path d="M0 6 L5 0 L10 6 Z" fill="#3c4a78"/></svg>
<div class="a" style="left:396px;top:548px;width:315px;height:16px;background:#7196c6"></div>
<div class="a" style="left:396px;top:548px;width:16px;height:16px;background:linear-gradient(#dce8f8 50%,#c1d5f0 50%);border:1px solid #6f8fc0"></div>
<div class="a" style="left:411px;top:548px;width:70px;height:16px;background:linear-gradient(#dce8f8 50%,#c1d5f0 50%);border:1px solid #6f8fc0"></div>
<svg style="left:400px;top:551px" width="6" height="10" viewBox="0 0 6 10"><path d="M6 0 L0 5 L6 10 Z" fill="#3c4a78"/></svg>
<div class="a" style="left:729px;top:47px;width:4px;height:518px;background:#a0a0a0"></div>
<div class="a" style="left:401px;top:571px;width:66px;height:20px;background:#e1e1e1;border:1px solid #adadad"></div>
<div class="t f" style="left:427.5px;top:575px;transform:scaleX(0.84)">Fermer</div>
<svg style="left:410px;top:575px" width="12" height="12" viewBox="0 0 12 12"><path d="M1.5 1.5 L10.5 10.5 M10.5 1.5 L1.5 10.5" stroke="#f0541e" stroke-width="3" fill="none"/></svg>
<div class="t f fr" style="right:84.5px;top:79px">Type Condition</div>
<div class="t f fr" style="right:84.5px;top:99px">Synchro. Structure</div>
<div class="t f fr" style="right:84.5px;top:119px">Règle</div>
<div class="t f fr" style="right:84.5px;top:138px">Exe. Règ. Reinit.</div>
<div class="t f fr" style="right:84.5px;top:157px">Freq. Act. (sec)</div>
<div class="t f fr" style="right:84.5px;top:197px">Liste Par. Objet</div>
<div class="t f fr" style="right:84.5px;top:239px">Base</div>
<div class="t f fr" style="right:84.5px;top:260px">Table</div>
<div class="t f fr" style="right:84.5px;top:279px">Clé 1 Table</div>
<div class="t f fr" style="right:84.5px;top:298px">Clé 2 Table</div>
<div class="t f fr" style="right:84.5px;top:317px">Clé 3 Table</div>
<div class="t f fr" style="right:84.5px;top:357px">Entité Liée</div>
<div class="t f fr" style="right:84.5px;top:376px">Liste sur Entité</div>
<div class="t f fr" style="right:84.5px;top:395px">Statut LEN</div>
<div class="t f fr" style="right:84.5px;top:414px">Clé 1 Entité</div>
<div class="t f fr" style="right:84.5px;top:433px">Clé 2 Entité</div>
<div class="t f fr" style="right:84.5px;top:452px">Clé 3 Entité</div>
<div class="t f" style="left:867.5px;top:119px">NomCsaLig</div>
<div class="t f" style="left:867.5px;top:197px">NomCsaLig</div>
<div class="t f" style="left:867.5px;top:260px">NomCsaLig</div>
<div class="t f" style="left:867.5px;top:279px">RefCse</div>
<div class="t f" style="left:867.5px;top:298px">VariOri</div>
<div class="t f" style="left:867.5px;top:317px">RefCsa</div>
<div class="t f" style="left:882.2px;top:158.6px;font-size:9.5px">0</div>
<div class="a" style="left:745px;top:177px;width:195px;height:14px;background:#e1e1e1;border:1px solid #b8b8b8"></div>
<div class="a" style="left:745px;top:217px;width:195px;height:14px;background:#e1e1e1;border:1px solid #b8b8b8"></div>
<div class="a" style="left:745px;top:337px;width:195px;height:14px;background:#e1e1e1;border:1px solid #b8b8b8"></div>
<div class="a" style="left:864px;top:74px;width:72px;height:21px;background:#c9c9c9"></div>
<div class="t f" style="left:867.5px;top:79px;color:#7d7d7d">[LPO] Liste Pa</div>
<div class="a" style="left:864px;top:235px;width:72px;height:19px;background:#c9c9c9"></div>
<div class="a" style="left:864px;top:100px;width:10px;height:10px;background:#fff;border:1px solid #d5d5d5"></div>
<div class="a" style="left:864px;top:138px;width:10px;height:10px;background:#fff;border:1px solid #d5d5d5"></div>
<svg style="left:865px;top:139px" width="8" height="8" viewBox="0 0 8 8"><path d="M1.2 4 L3.2 6 L6.8 1.6" fill="none" stroke="#b4b4b4" stroke-width="1.3"/></svg>
<div class="a" style="left:734px;top:46px;width:202px;height:24px;background:linear-gradient(#f7f7f7,#f0f0f0)"></div>
<svg style="left:0;top:0" width="936" height="614" viewBox="0 0 936 614"><g fill="none" stroke="#9c9c9c" stroke-width="1"><path d="M734.5 565 V69.5 H740 L746.8 55 Q749 50.5 753.5 50.5 H820 Q824 51 826.5 56.5"/><path d="M820.5 69.5 L827.5 55 Q830 50.5 834 50.5 H899.5 Q903.5 51 906 56.5"/><path d="M900 69.5 L907 55 Q909.5 50.5 913.5 50.5 H937"/></g><path d="M735.5 565 V70.5" stroke="#fbfbfb" stroke-width="1" fill="none"/></svg>
<svg style="left:751.5px;top:51.5px" width="13" height="16" viewBox="0 0 13 16"><path d="M5 0.5 H10 L12.5 3 V11.5 H5 Z" fill="#e9e2d4" stroke="#d6cfc0" stroke-width="0.6"/><path d="M10 0.5 V3 H12.5 Z" fill="#b9b4ab"/><path d="M0.5 4 H5.5 L8 6.5 V15.5 H0.5 Z" fill="#f3eee2" stroke="#d6cfc0" stroke-width="0.6"/><path d="M5.5 4 V6.5 H8 Z" fill="#b9b4ab"/></svg>
<svg style="left:832px;top:52px" width="14" height="15" viewBox="0 0 14 15"><path d="M1.2 11 Q1.6 3 5.4 1.2 Q6.6 0.2 8 0.4 Q9.4 0.2 10 1.4 Q12.4 3.4 12.8 11 Z" fill="#3a3d5c"/><ellipse cx="7" cy="12" rx="6.8" ry="2.4" fill="#4a4d68"/><path d="M0.6 11.2 Q7 13.6 13.4 11.2" stroke="#8d8c86" stroke-width="0.8" fill="none"/><circle cx="3.8" cy="7.6" r="1.9" fill="#c9ccd6"/><circle cx="3.8" cy="7.6" r="0.8" fill="#8e93a8"/></svg>
<svg style="left:912px;top:53px" width="14" height="14" viewBox="0 0 14 14"><circle cx="7" cy="7" r="6.6" fill="#c9963d" stroke="#8f6420" stroke-width="0.8"/><circle cx="7" cy="7" r="4.3" fill="#e4bd6a"/><circle cx="4.6" cy="5" r="0.9" fill="#8f6420"/><circle cx="9.2" cy="4.8" r="0.9" fill="#8f6420"/><circle cx="7" cy="7.4" r="0.9" fill="#8f6420"/><circle cx="4.8" cy="9.4" r="0.9" fill="#8f6420"/><circle cx="9.4" cy="9.2" r="0.9" fill="#8f6420"/></svg>
<div class="t f" style="left:769px;top:54px">Généralités</div>
<div class="t f" style="left:850.5px;top:54px">Démarrage</div>
<div class="t f" style="left:930.5px;top:54px;font-weight:700">D</div>
<div class="a" style="left:737px;top:564px;width:199px;height:1px;background:#a0a0a0"></div>
<div class="a" style="left:740px;top:571px;width:70px;height:20px;background:#cfcfcf;border:1px solid #bcbcbc"></div>
<div class="a" style="left:814px;top:571px;width:70px;height:20px;background:#cfcfcf;border:1px solid #bcbcbc"></div>
<div class="t f" style="left:767.5px;top:575px;color:#8a8a8a">Valider</div>
<svg style="left:751px;top:576px" width="11" height="10" viewBox="0 0 11 10"><path d="M1.2 5.2 L4.2 8.2 L9.8 1.6" fill="none" stroke="#b5b5b5" stroke-width="2.4"/></svg>
<svg style="left:823px;top:575.5px" width="11" height="11" viewBox="0 0 11 11"><path d="M1.4 1.4 L9.6 9.6 M9.6 1.4 L1.4 9.6" fill="none" stroke="#b3b3b3" stroke-width="2.8"/></svg>
<div class="t f" style="left:839px;top:575px;color:#8a8a8a">Annuler</div>
<div class="a" style="left:485px;top:120px;width:252px;height:500px;background:#f2f2f2;border:1px solid #cccccc;box-shadow:3px 3px 4px rgba(0,0,0,0.45)"></div>
<div class="a" style="left:488px;top:488px;width:243px;height:22px;background:#91c9f7"></div>
<div class="t m" style="left:519.9px;top:127.5px;transform:scaleX(0.949);transform-origin:0 0">Création (F9)</div>
<div class="t m" style="left:519.9px;top:149.5px;transform:scaleX(1.012);transform-origin:0 0">Modification (F1)</div>
<div class="t m" style="left:519.9px;top:171.5px;transform:scaleX(1.007);transform-origin:0 0">Modification Globale (Maj+F1)</div>
<div class="t m" style="left:519.9px;top:193.5px;transform:scaleX(0.983);transform-origin:0 0">Duplication (F7)</div>
<div class="t m" style="left:519.9px;top:215.5px;transform:scaleX(0.938);transform-origin:0 0">Suppression (F6)</div>
<div class="t m" style="left:519.9px;top:237.5px;transform:scaleX(0.936);transform-origin:0 0">Détail (F8)</div>
<div class="t m" style="left:519.9px;top:266.5px;transform:scaleX(0.948);transform-origin:0 0">Accès Requête(s) (Ctrl+F10)</div>
<div class="t m" style="left:519.9px;top:295.5px;transform:scaleX(0.951);transform-origin:0 0">Gestion Structure (F10)</div>
<div class="t m" style="left:519.9px;top:317.5px;transform:scaleX(0.96);transform-origin:0 0">Visualisation Structure (F12)</div>
<div class="t m" style="left:519.9px;top:346.5px;transform:scaleX(0.977);transform-origin:0 0">Copier dans le Navigateur</div>
<div class="t m" style="left:519.9px;top:368.5px;transform:scaleX(0.972);transform-origin:0 0">Localiser dans Navigateur</div>
<div class="t m" style="left:519.9px;top:390.5px;transform:scaleX(1.013);transform-origin:0 0">Définition Navigateur</div>
<div class="t m" style="left:519.9px;top:412.5px;transform:scaleX(0.937);transform-origin:0 0">Test Liste Paramétrée (F11)</div>
<div class="t m" style="left:519.9px;top:441.5px;transform:scaleX(0.978);transform-origin:0 0">Cas d'Emploi dans les Actions</div>
<div class="t m" style="left:519.9px;top:463.5px;transform:scaleX(0.946);transform-origin:0 0">Cas d'Emploi (GFD)</div>
<div class="t m" style="left:519.9px;top:492.5px;transform:scaleX(0.97);transform-origin:0 0">Génération</div>
<div class="t m" style="left:519.9px;top:521.5px;transform:scaleX(1.0);transform-origin:0 0">Exportation</div>
<div class="t m" style="left:519.9px;top:543.5px;transform:scaleX(1.0);transform-origin:0 0">Importation de Données</div>
<div class="t m" style="left:519.9px;top:572.5px;transform:scaleX(0.976);transform-origin:0 0">Définition Filtres et Tris</div>
<div class="t m" style="left:519.9px;top:594.5px;transform:scaleX(1.0);transform-origin:0 0">Condition par Défaut</div>
<div class="a" style="left:516px;top:258px;width:218px;height:1px;background:#d7d7d7"></div>
<div class="a" style="left:516px;top:287px;width:218px;height:1px;background:#d7d7d7"></div>
<div class="a" style="left:516px;top:338px;width:218px;height:1px;background:#d7d7d7"></div>
<div class="a" style="left:516px;top:433px;width:218px;height:1px;background:#d7d7d7"></div>
<div class="a" style="left:516px;top:484px;width:218px;height:1px;background:#d7d7d7"></div>
<div class="a" style="left:516px;top:513px;width:218px;height:1px;background:#d7d7d7"></div>
<div class="a" style="left:516px;top:564px;width:218px;height:1px;background:#d7d7d7"></div>
<svg style="left:720px;top:494px" width="5" height="8" viewBox="0 0 5 8"><path d="M0.7 0.5 L4.2 4 L0.7 7.5" fill="none" stroke="#222" stroke-width="1.25"/></svg>
<svg style="left:720px;top:523px" width="5" height="8" viewBox="0 0 5 8"><path d="M0.7 0.5 L4.2 4 L0.7 7.5" fill="none" stroke="#222" stroke-width="1.25"/></svg>
<div class="a" style="left:731px;top:486px;width:193px;height:70px;background:#f2f2f2;border:1px solid #cccccc;box-shadow:3px 3px 4px rgba(0,0,0,0.45)"></div>
<div class="a" style="left:751px;top:486px;width:128px;height:24px;background:#f3f300"></div>
<div class="t m" style="left:765.6px;top:492.7px;transform:scaleX(0.945);transform-origin:0 0">Listes Sélectionnées</div>
<div class="t m" style="left:765.6px;top:514.7px;transform:scaleX(0.926);transform-origin:0 0">Listes à Générer</div>
<div class="t m" style="left:765.6px;top:536.7px;transform:scaleX(0.934);transform-origin:0 0">Toutes les Listes</div>
<svg style="left:615px;top:493px" width="13" height="20" viewBox="0 0 13 20"><path d="M1 1 V16 L4.5 12.8 L7.2 19 L9.6 18 L7 12 H11.8 Z" fill="#fff" stroke="#000" stroke-width="1"/></svg></body></html>
